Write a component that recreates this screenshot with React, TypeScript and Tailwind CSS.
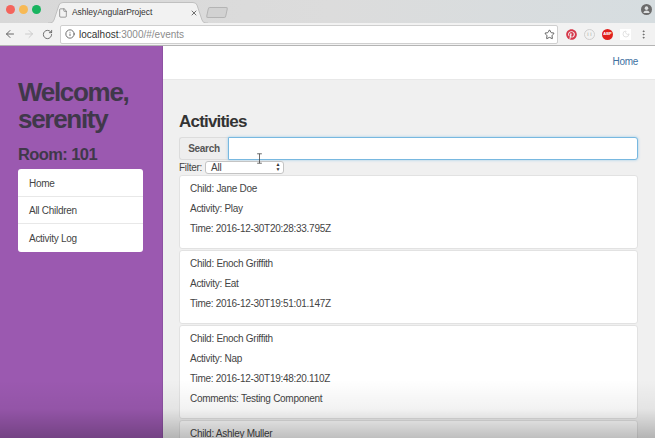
import { ArrowLeft, ArrowRight, RotateCw, Info, Star, File, X, MoreVertical, Moon } from 'lucide-react'
import { FaPinterest } from 'react-icons/fa'

type Activity = { child: string; activity?: string; time?: string; comments?: string }

const activities: Activity[] = [
  { child: 'Jane Doe', activity: 'Play', time: '2016-12-30T20:28:33.795Z' },
  { child: 'Enoch Griffith', activity: 'Eat', time: '2016-12-30T19:51:01.147Z' },
  { child: 'Enoch Griffith', activity: 'Nap', time: '2016-12-30T19:48:20.110Z', comments: 'Testing Component' },
  { child: 'Ashley Muller' },
]

function BrowserChrome() {
  return (
    <div className="h-[46px] shrink-0 border-b border-[#b4b4b4] bg-[#f2f2f2]">
      <div className="flex h-[23px] items-end bg-gradient-to-r from-[#d8d8d8] via-[#dcdcdc] to-[#d6dde0] pl-[6px]">
        <div className="flex h-[23px] w-[40px] items-center gap-[4px] pb-[5px]">
          <span className="h-[9px] w-[9px] rounded-full bg-[#f4645c]" />
          <span className="h-[9px] w-[9px] rounded-full bg-[#f7b955]" />
          <span className="h-[9px] w-[9px] rounded-full bg-[#18b45f]" />
        </div>
        <div className="relative ml-[2px] flex h-[21px] w-[160px] items-center pl-[10px] pr-[10px]">
          <svg viewBox="0 0 160 21" className="absolute inset-0 h-full w-full" fill="#f2f2f2" stroke="#c0c0c0">
            <path d="M0 21 L2 21 Q5 21 6 18 L11 3 Q12 .5 15 .5 L145 .5 Q148 .5 149 3 L154 18 Q155 21 158 21 L160 21" />
          </svg>
          <File className="relative h-[10px] w-[10px] text-[#666]" strokeWidth={1.5} />
          <span className="relative ml-[4px] flex-1 text-[8.5px] tracking-[-0.05px] text-[#333]">AshleyAngularProject</span>
          <X className="relative h-[8px] w-[8px] text-[#555]" strokeWidth={2.5} />
        </div>
        <div className="mb-[5px] -ml-[1px] h-[11px] w-[20px] -skew-x-12 rounded-[2px] border border-[#b4b4b4] bg-[#d2d2d2]" />
        <div className="flex-1" />
        <svg viewBox="0 0 16 16" className="mb-[8px] mr-[3px] h-[11px] w-[11px] text-[#6b6b6b]" fill="currentColor">
          <circle cx="8" cy="8" r="8" />
          <circle cx="8" cy="6" r="2.6" fill="#dcdfe0" />
          <path d="M3.5 13c.6-2.4 2.4-3.4 4.5-3.4s3.900 1 4.500 3.400z" fill="#dcdfe0" />
        </svg>
      </div>
      <div className="flex h-[22px] items-center pl-[4px]">
        <ArrowLeft className="h-[12px] w-[12px] text-[#666]" strokeWidth={2} />
        <ArrowRight className="ml-[7px] h-[12px] w-[12px] text-[#ccc]" strokeWidth={2} />
        <RotateCw className="ml-[7px] h-[11px] w-[11px] text-[#666]" strokeWidth={2} />
        <div className="ml-[7px] flex h-[19px] w-[498px] items-center rounded-[2px] border border-[#cfcfcf] bg-white pl-[4px] pr-[2px]">
          <Info className="h-[10px] w-[10px] text-[#555]" strokeWidth={2} />
          <span className="ml-[4px] flex-1 text-[10px]">
            <span className="text-[#333]">localhost</span>
            <span className="text-[#8c8c8c]">:3000/#/events</span>
          </span>
          <Star className="h-[11px] w-[11px] text-[#444]" strokeWidth={1.8} />
        </div>
        <FaPinterest className="ml-[8px] h-[11px] w-[11px] text-[#d6384a]" />
        <div className="ml-[7px] flex h-[11px] w-[11px] items-center justify-center rounded-full border border-[#cfcfcf] text-[6px] text-[#aaa]">i i</div>
        <div className="ml-[7px] flex h-[11px] w-[11px] items-center justify-center rounded-full bg-[#e0201c] text-[4px] font-bold text-white">ABP</div>
        <div className="ml-[7px] flex h-[11px] w-[11px] items-center justify-center bg-white">
          <Moon className="h-[8px] w-[8px] text-[#d4d4d4]" strokeWidth={2} />
        </div>
        <MoreVertical className="ml-[7px] h-[11px] w-[11px] text-[#666]" strokeWidth={2} />
      </div>
    </div>
  )
}

function Sidebar() {
  return (
    <aside className="w-[163px] shrink-0 border-r border-[#8e52a3] bg-[#9b59b0] pl-[18px] pr-[19px] pt-[33px] text-[#40384a]">
      <h1 className="text-[26px] leading-[27px] font-bold tracking-[-1.3px]">
        Welcome,
        <br />
        serenity
      </h1>
      <h3 className="mt-[11px] text-[16.5px] leading-[20px] font-bold tracking-[-0.6px]">Room: 101</h3>
      <ul className="mt-[5px] rounded-[3px] bg-white text-[10px] tracking-[-0.28px] text-[#444]">
        <li className="flex h-[28px] items-center border-b border-[#e8e8e8] pl-[11px] pt-[1px]">Home</li>
        <li className="flex h-[27px] items-center border-b border-[#e8e8e8] pl-[11px] pt-[1px]">All Children</li>
        <li className="flex h-[28px] items-center pl-[11px]">Activity Log</li>
      </ul>
    </aside>
  )
}

function ActivityCard({ item }: { item: Activity }) {
  return (
    <div className="mb-px flex flex-col gap-[8px] rounded-[3px] border border-[#e2e2e2] bg-white px-[10px] pt-[7px] pb-[13px] text-[10px] leading-[12px] tracking-[-0.28px] text-[#444]">
      <p>Child: {item.child}</p>
      {item.activity && <p>Activity: {item.activity}</p>}
      {item.time && <p>Time: {item.time}</p>}
      {item.comments && <p>Comments: {item.comments}</p>}
    </div>
  )
}

export default function App() {
  return (
    <div className="relative flex h-[438px] w-[655px] flex-col overflow-hidden font-['Liberation_Sans',Arial,sans-serif]">
      <BrowserChrome />
      <div className="flex min-h-0 flex-1">
        <Sidebar />
        <main className="min-w-0 flex-1 bg-[#f0f0f0]">
          <nav className="flex h-[34px] items-start justify-end border-b border-[#e8e8e8] bg-white pt-[10px] pr-[17px] text-[10px] leading-[12px] tracking-[-0.28px] text-[#41709f]">
            Home
          </nav>
          <div className="pl-[16px] pr-[17px] pt-[32px]">
            <h2 className="text-[17px] leading-[20px] font-bold tracking-[-0.8px] text-[#333]">Activities</h2>
            <div className="mt-[5px] flex h-[23px]">
              <span className="flex w-[49px] items-center justify-center rounded-l-[3px] border border-r-0 border-[#dcdcdc] bg-[#eeeeee] text-[10px] font-bold tracking-[-0.28px] text-[#555]">
                Search
              </span>
              <input className="min-w-0 flex-1 rounded-r-[3px] border border-[#78b8e0] bg-white shadow-[0_0_3px_#9ccbe8] outline-none" />
            </div>
            <div className="flex h-[14px] items-center gap-[3px] text-[10px] tracking-[-0.28px] text-[#444]">
              <span>Filter:</span>
              <div className="flex h-[13px] w-[79px] items-center justify-between rounded-[3px] border border-[#c4c4c4] bg-white pl-[5px] pr-[3px]">
                <span>All</span>
                <span className="flex flex-col text-[5px] leading-[5px] text-[#333]">
                  <span>▲</span>
                  <span>▼</span>
                </span>
              </div>
            </div>
            <div className="mt-[1px]">
              {activities.map((a) => (
                <ActivityCard key={a.child + a.activity} item={a} />
              ))}
            </div>
          </div>
        </main>
      </div>
      {/* video fade along the bottom edge */}
      <div className="pointer-events-none absolute inset-x-0 bottom-0 h-[58px] bg-gradient-to-b from-transparent via-black/5 to-black/25" />
      <svg viewBox="0 0 8 14" className="absolute left-[256px] top-[153px] h-[11px] w-[7px] text-[#444]" fill="none" stroke="currentColor" strokeWidth="1">
        <path d="M1 1h6M4 1v12M1 13h6" />
      </svg>
    </div>
  )
}
